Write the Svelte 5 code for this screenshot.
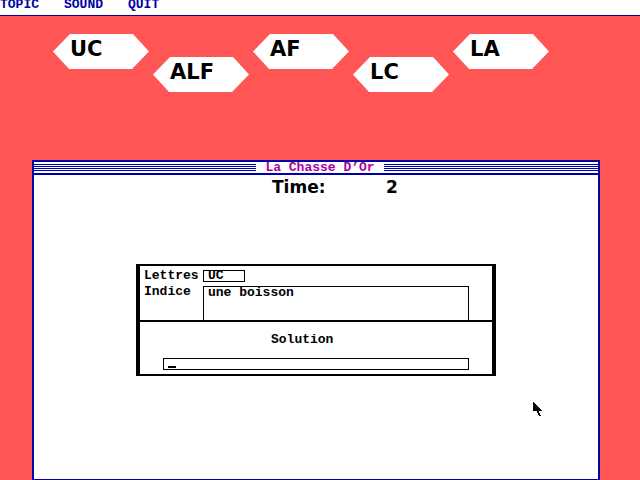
<script>
  const menus = ['TOPIC', 'SOUND', 'QUIT'];
  const tiles = ['UC', 'ALF', 'AF', 'LC', 'LA'];
  const time = 2;
  const letters = 'UC';
  let hint = $state('une boisson');
  let answer = $state('');
</script>

<div class="screen">
  <nav class="menu">
    {#each menus as item}
      <button type="button">{item}</button>
    {/each}
  </nav>

  <ul class="tiles">
    {#each tiles as tile}
      <li>{tile}</li>
    {/each}
  </ul>

  <main class="window">
    <header class="title">
      <span class="stripes"></span>
      <h1>La Chasse D’Or</h1>
      <span class="stripes"></span>
    </header>

    <div class="timer">
      <span class="timer-label">Time:</span>
      <span>{time}</span>
    </div>

    <form class="dialog" onsubmit={(e) => e.preventDefault()}>
      <section class="clue">
        <div class="row">
          <label for="letters">Lettres</label>
          <output id="letters">{letters}</output>
        </div>
        <div class="row grow">
          <label for="hint">Indice</label>
          <textarea id="hint" bind:value={hint} readonly></textarea>
        </div>
      </section>
      <section class="solution">
        <label for="answer">Solution</label>
        <div class="answer">
          <input id="answer" autocomplete="off" bind:value={answer} />
          {#if answer === ''}<span class="caret"></span>{/if}
        </div>
      </section>
    </form>
  </main>

  <svg class="pointer" width="10" height="15" viewBox="0 0 10 15" shape-rendering="crispEdges" aria-hidden="true">
    <path d="M0 0h1v1h1v1h1v1h1v1h1v1h1v1h1v1h1v1h1v1H6v2h1v2h1v1H6v-1H5v-2H4V9H0z" />
  </svg>
</div>

<style>
  :global(body) {
    margin: 0;
    background: #ff5555;
  }

  .screen {
    position: relative;
    display: flex;
    flex-direction: column;
    min-height: 100vh;
    overflow: hidden;
    color: #000;
    font: bold 13px/16px 'Liberation Mono', 'Courier New', monospace;
  }

  .menu {
    display: flex;
    height: 15px;
    background: #fff;
    border-bottom: 1px solid #0000aa;
  }

  .menu button {
    width: 64px;
    height: 10px;
    padding: 0;
    border: 0;
    background: none;
    color: #0000aa;
    font: inherit;
    line-height: 10px;
    text-align: left;
  }

  .tiles {
    display: flex;
    align-items: flex-start;
    gap: 4px;
    height: 126px;
    margin: 0;
    padding: 18px 0 0 53px;
    list-style: none;
  }

  .tiles li {
    box-sizing: border-box;
    width: 96px;
    height: 35px;
    padding-left: 17px;
    background: #fff;
    clip-path: polygon(17px 0, 80px 0, 100% 50%, 79px 100%, 16px 100%, 0 50%);
    font: bold 21px/30px 'DejaVu Sans', sans-serif;
  }

  .tiles li:nth-child(even) {
    margin-top: 23px;
  }

  .window {
    display: flex;
    flex: 1;
    flex-direction: column;
    align-items: center;
    margin: 0 40px 0 32px;
    border: 2px solid #0000aa;
    border-bottom-width: 1px;
    background: #fff;
  }

  .title {
    box-sizing: border-box;
    display: flex;
    align-self: stretch;
    height: 13px;
    border-bottom: 2px solid #0000aa;
  }

  .stripes {
    flex: 1;
    height: 7px;
    margin-top: 2px;
    background: repeating-linear-gradient(#0000aa 0 1px, #fff 1px 2px);
  }

  .stripes:first-child {
    padding-right: 8px;
  }

  h1 {
    width: 128px;
    margin: 0;
    color: #aa00aa;
    font: inherit;
    line-height: 12px;
    text-align: center;
  }

  .timer {
    display: flex;
    box-sizing: border-box;
    width: 360px;
    padding-left: 136px;
    font: bold 17px/24px 'DejaVu Sans', sans-serif;
  }

  .timer-label {
    width: 114px;
  }

  .dialog {
    box-sizing: border-box;
    width: 360px;
    margin-top: 65px;
    border: solid #000;
    border-width: 2px 4px;
  }

  .clue {
    display: flex;
    flex-direction: column;
    gap: 4px;
    height: 50px;
    padding: 4px 23px 0 4px;
    border-bottom: 2px solid #000;
  }

  .row {
    display: flex;
    line-height: 12px;
  }

  .row label {
    width: 59px;
  }

  .grow {
    flex: 1;
  }

  output,
  input,
  textarea {
    display: block;
    box-sizing: border-box;
    height: 12px;
    margin: 0;
    padding: 0 4px;
    border: 1px solid #000;
    border-radius: 0;
    outline: 0;
    background: #fff;
    color: inherit;
    font: inherit;
    line-height: 10px;
  }

  output {
    width: 42px;
  }

  textarea {
    flex: 1;
    height: auto;
    border-bottom: 0;
    resize: none;
    overflow: hidden;
    line-height: 12px;
  }

  .solution {
    display: flex;
    flex-direction: column;
    gap: 10px;
    padding: 10px 23px 4px;
  }

  .solution label {
    padding-left: 108px;
  }

  .answer {
    position: relative;
  }

  .answer input {
    width: 100%;
  }

  .caret {
    position: absolute;
    left: 5px;
    bottom: 2px;
    width: 8px;
    height: 2px;
    background: #000;
  }

  .pointer {
    position: absolute;
    left: 533px;
    top: 402px;
  }
</style>
